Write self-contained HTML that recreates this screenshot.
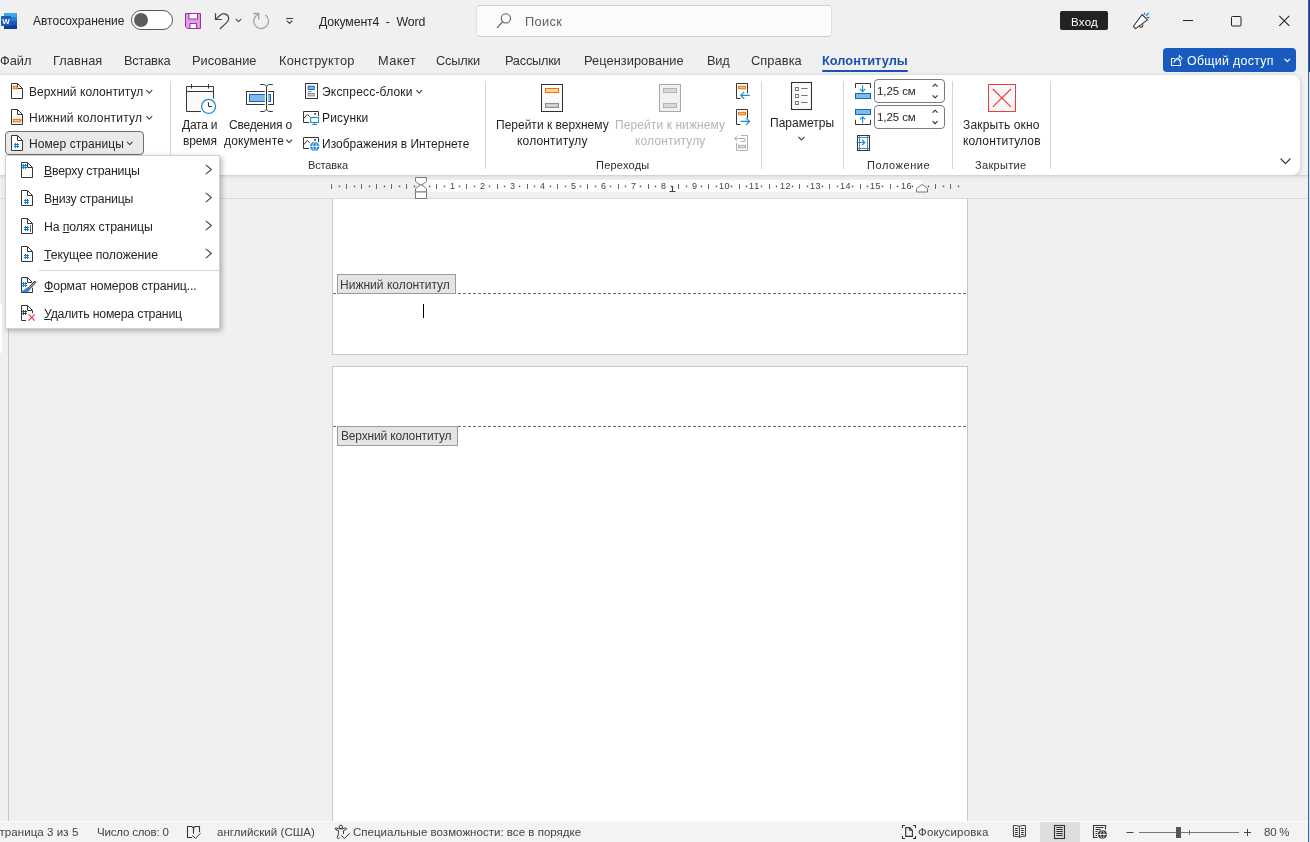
<!DOCTYPE html>
<html lang="ru"><head><meta charset="utf-8"><title>Документ4 - Word</title>
<style>
*{box-sizing:border-box;margin:0;padding:0}
html,body{width:1310px;height:842px;overflow:hidden}
body{position:relative;background:#f0f0f0;font-family:"Liberation Sans","DejaVu Sans",sans-serif;font-size:12px;color:#262626}
.a{position:absolute}
.t{will-change:transform;position:absolute;white-space:nowrap;line-height:20px;height:20px}
.t.z{z-index:30}
.t u{text-decoration:underline;text-underline-offset:0.5px;text-decoration-thickness:1px}
svg{position:absolute;overflow:visible}
#top{left:0;top:0;width:1310px;height:77px;background:#f0f0f0}
#ribbon{left:-10px;top:75px;width:1310px;height:100px;background:#fff;border-radius:8px;box-shadow:0 1px 4px rgba(0,0,0,.22)}
.sep{position:absolute;width:1px;top:81px;height:88px;background:#d6d6d6}
#search{left:476px;top:5px;width:356px;height:32px;background:#fbfbfb;border:1px solid #e0e0e0;border-top-color:#d2d2d2;border-bottom-color:#d0d0d0;border-radius:4px}
#login{left:1060px;top:11px;width:48px;height:19px;background:#222;border-radius:2px}
#share{left:1163px;top:48px;width:133px;height:24px;background:#185abd;border-radius:4px}
#tabul{left:822px;top:69.7px;width:86px;height:2.4px;background:#1a52b3;border-radius:1.2px}
#toggle{left:131px;top:10px;width:42px;height:20px;border:1px solid #555;border-radius:10px;background:#fff}
#toggle i{position:absolute;left:2px;top:2px;width:14px;height:14px;border-radius:50%;background:#5c5c5c}
#pnbtn{left:5px;top:131px;width:139px;height:24px;background:#e9e9e9;border:1px solid #6e6e6e;border-radius:4px}
.spin{position:absolute;left:874px;width:71px;height:24px;background:#fff;border:1px solid #7a7a7a;border-radius:4px}
#menu{left:5px;top:155px;width:215px;height:174px;background:#fff;border:1px solid #d2d2d2;box-shadow:2px 2px 5px rgba(0,0,0,.28);z-index:20}
#menusep{left:39px;top:270px;width:180px;height:1px;background:#d4d4d4;z-index:21}
.page{position:absolute;left:332px;width:636px;background:#fff;border:1px solid #c8c8c8}
.dash{position:absolute;left:333px;width:634px;height:1px;background:repeating-linear-gradient(90deg,#6a6a6a 0 3px,transparent 3px 5px)}
.tag{position:absolute;background:#e4e4e4;border:1px solid #9a9a9a}
#status{left:0;top:821px;width:1310px;height:21px;background:#f3f3f3;border-top:1px solid #fcfcfc}
#rulerw{left:421px;top:179.6px;width:501px;height:12px;background:#fdfdfd}
#vr{left:0;top:198px;width:9px;height:623px;border-right:1px solid #c6c6c6;background:#f0f0f0}
#vrw{left:0;top:304px;width:2px;height:49px;background:#fff}
#redge{left:1308px;top:0;width:2px;height:842px;background:linear-gradient(90deg,#2f66bd 0 1px,transparent 1px),linear-gradient(180deg,#1d3f86 0 72px,#dfe4ec 72px)}
#selview{left:1040px;top:822px;width:40px;height:20px;background:#dedede}
.z{z-index:30}

</style></head><body>
<div class="a" id="top"></div>
<div class="a" id="ribbon"></div>
<div class="a" id="search"></div>
<div class="a" id="login"></div>
<div class="a" id="share"></div>
<div class="a" id="tabul"></div>
<div class="a" id="toggle"><i></i></div>
<div class="a" id="pnbtn"></div>
<div class="sep" style="left:170px"></div>
<div class="sep" style="left:485px"></div>
<div class="sep" style="left:761px"></div>
<div class="sep" style="left:843px"></div>
<div class="sep" style="left:952px"></div>
<div class="sep" style="left:1050px"></div>
<div class="spin" style="top:79px"></div>
<div class="spin" style="top:105px"></div>
<div class="page" style="top:185px;height:170px"></div>
<div class="page" style="top:366px;height:470px"></div>
<div class="dash" style="top:293px"></div>
<div class="dash" style="top:426px"></div>
<div class="tag" style="left:337px;top:274px;width:119px;height:20px"></div>
<div class="tag" style="left:337px;top:426px;width:121px;height:20px"></div>
<div class="a" style="left:423px;top:304px;width:1px;height:14px;background:#000"></div>
<div class="a" id="vr"></div>
<div class="a" id="vrw"></div>
<div class="a" id="rulercover" style="left:0;top:175px;width:1310px;height:24px;background:linear-gradient(180deg,#cdcdcd 0,#dedede 1px,#e9e9e9 2.5px,#f0f0f0 5px);border-bottom:1px solid #dadada"></div>
<div class="a" id="rulerw"></div>
<div class="a" id="status"></div>
<div class="a" id="selview"></div>
<div class="a" id="menu"></div>
<div class="a" id="menusep"></div>
<div class="a" id="redge"></div>
<svg style="left:0;top:0;z-index:10" width="1310" height="842" viewBox="0 0 1310 842"><rect x="4" y="13" width="13" height="4" fill="#41a5ee"/><rect x="4" y="17" width="13" height="4" fill="#2b7cd3"/><rect x="4" y="21" width="13" height="4" fill="#185abd"/><rect x="4" y="25" width="13" height="4" fill="#103f91"/><rect x="4" y="13" width="13" height="16" rx="1" fill="none"/><rect x="1" y="16" width="10.2" height="10" rx="0.8" fill="#1b5cbe"/><text x="6.1" y="23.8" text-anchor="middle" font-family="Liberation Sans, sans-serif" font-weight="700" font-size="8px" fill="#fff">W</text>
<path d="M185.5 13.5H200.5V28.5H187.5L185.5 26.5Z" fill="#dc9fe2" stroke="#a02fa8" stroke-width="1"/><rect x="189" y="13.5" width="8.5" height="5.5" fill="#fff" stroke="#a02fa8" stroke-width="1"/><rect x="190" y="23.5" width="6.5" height="5" fill="#fff" stroke="#a02fa8" stroke-width="1"/>
<path d="M215.5 13.5V19.5H221.5" fill="none" stroke="#444" stroke-width="1.2" stroke-linecap="round" stroke-linejoin="round"/><path d="M215.7 19.3L220.2 15.2C223.5 12.3 228.7 14 228.7 18.6C228.7 20.8 227.5 21.8 225.8 23.4L220.3 28.5" fill="none" stroke="#444" stroke-width="1.2" stroke-linecap="round" stroke-linejoin="round"/>
<path d="M236.1 19.35L238.5 21.65L240.9 19.35" fill="none" stroke="#444" stroke-width="1.1" stroke-linecap="round" stroke-linejoin="round"/>
<path d="M253.6 13.5H258.8V19" fill="none" stroke="#a2a2a2" stroke-width="1.3" stroke-linecap="round" stroke-linejoin="round"/><path d="M258.6 14.2A7.4 7.4 0 1 0 265.6 15.2" fill="none" stroke="#a2a2a2" stroke-width="1.3" stroke-linecap="round"/>
<path d="M286.2 18.5H293" stroke="#444" stroke-width="1.1" fill="none"/><path d="M287.20000000000005 21.0L289.6 23.4L292.0 21.0" fill="none" stroke="#444" stroke-width="1.1" stroke-linecap="round" stroke-linejoin="round"/>
<circle cx="505.9" cy="18.4" r="4.6" fill="none" stroke="#5a5a5a" stroke-width="1.1"/><path d="M502.6 21.8L497.3 27.6" stroke="#5a5a5a" stroke-width="1.2" stroke-linecap="round"/>
<path d="M1142.1 14.5L1147.5 19.9L1135.6 28.6L1133.5 26.3Z" fill="#fff" stroke="#333" stroke-width="1.1" stroke-linejoin="round"/><path d="M1139.4 26.3A1.7 1.7 0 0 0 1142.6 24.6" fill="none" stroke="#333" stroke-width="1.1"/><path d="M1144.3 13L1144.7 14.3M1146.4 15.4L1148.4 13.2M1147.2 17.4L1149 17.6" stroke="#0078d4" stroke-width="1.1" stroke-linecap="round"/>
<path d="M1183 20.5H1193" stroke="#222" stroke-width="1"/><rect x="1231.5" y="16.5" width="9.5" height="9.5" rx="1" fill="none" stroke="#222" stroke-width="1"/><path d="M1279.3 15.8L1289.3 25.8M1289.3 15.8L1279.3 25.8" stroke="#222" stroke-width="1.05"/>
<path d="M1175 58.5H1171.5V65.5H1180.5V61.5" fill="none" stroke="#fff" stroke-width="1.1" stroke-linejoin="round"/><path d="M1174 62.5C1174.3 59.5 1176.5 58 1179.3 58V55.2L1182.4 58.3L1179.3 61.3V59.2C1177 59.2 1175.3 60 1174 62.5Z" fill="none" stroke="#fff" stroke-width="1" stroke-linejoin="round"/>
<path d="M1284.8999999999999 59.199999999999996L1287.3 61.6L1289.7 59.199999999999996" fill="none" stroke="#fff" stroke-width="1.2" stroke-linecap="round" stroke-linejoin="round"/>
<path d="M11.5 83.5H17.5L22.5 88.5V98.5H11.5Z" fill="#fff" stroke="#363636" stroke-width="1" stroke-linejoin="miter"/><path d="M17.5 83.5V88.5H22.5" fill="none" stroke="#363636" stroke-width="1" stroke-linejoin="miter"/>
<rect x="13.2" y="86.2" width="4" height="2.6" fill="#f8c36e" stroke="#e8730c" stroke-width="1"/>
<path d="M11.5 109.5H17.5L22.5 114.5V124.5H11.5Z" fill="#fff" stroke="#363636" stroke-width="1" stroke-linejoin="miter"/><path d="M17.5 109.5V114.5H22.5" fill="none" stroke="#363636" stroke-width="1" stroke-linejoin="miter"/>
<rect x="13.3" y="119.3" width="7.6" height="2.6" fill="#f8c36e" stroke="#e8730c" stroke-width="1"/>
<path d="M146.70000000000002 90.45L149.3 93.14999999999999L151.9 90.45" fill="none" stroke="#444" stroke-width="1.1" stroke-linecap="round" stroke-linejoin="round"/>
<path d="M146.70000000000002 116.45L149.3 119.14999999999999L151.9 116.45" fill="none" stroke="#444" stroke-width="1.1" stroke-linecap="round" stroke-linejoin="round"/>
<path d="M286.7 140.0L289.2 142.60000000000002L291.7 140.0" fill="none" stroke="#444" stroke-width="1.1" stroke-linecap="round" stroke-linejoin="round"/>
<path d="M416.59999999999997 90.45L419.2 93.14999999999999L421.8 90.45" fill="none" stroke="#444" stroke-width="1.1" stroke-linecap="round" stroke-linejoin="round"/>
<path d="M798.6 137.2L801.4 140.0L804.1999999999999 137.2" fill="none" stroke="#444" stroke-width="1.1" stroke-linecap="round" stroke-linejoin="round"/>
<path d="M213.5 98.6V86.5H186.5V111.5H200.9" fill="#fafafa" stroke="#363636" stroke-width="1"/><path d="M186.5 91.5H213.5M191.5 84V88.5M208.5 84V88.5" stroke="#363636" stroke-width="1" fill="none"/><circle cx="208.6" cy="106.4" r="7" fill="#fff" stroke="#1e8bcd" stroke-width="1.3"/><path d="M208.5 102.3V106.5H212" fill="none" stroke="#363636" stroke-width="1"/>
<rect x="246.5" y="91.5" width="27" height="13" fill="#fff" stroke="#363636" stroke-width="1"/><rect x="249.5" y="94.5" width="21" height="7" fill="#83b9ea" stroke="#1267c4" stroke-width="1"/><path d="M266.5 84.5V111.5" stroke="#fff" stroke-width="3.4"/><path d="M260.2 84.5H263C265.3 84.5 266.5 85.8 266.5 87.5V108.5C266.5 110.2 265.3 111.5 263 111.5H260.2M272.8 84.5H270C267.7 84.5 266.5 85.8 266.5 87.5M272.8 111.5H270C267.7 111.5 266.5 110.2 266.5 108.5" fill="none" stroke="#363636" stroke-width="1"/>
<rect x="305.5" y="83.5" width="12" height="15" fill="#fff" stroke="#363636" stroke-width="1"/><rect x="308.2" y="86.2" width="6" height="3.3" fill="#83b9ea" stroke="#1267c4" stroke-width="1"/><path d="M307.8 91.7H311.4" stroke="#777" stroke-width="1"/><rect x="308.2" y="93.5" width="6" height="2.4" fill="#d0d0d0" stroke="#808080" stroke-width="0.9"/>
<path d="M318.5 116.2V111.5H303.5V122.5H309" fill="none" stroke="#363636" stroke-width="1"/><path d="M303.5 118.9L307.3 114.4L309.7 116.8" fill="none" stroke="#363636" stroke-width="1"/><rect x="314.2" y="113.0" width="1.7" height="1.7" fill="#363636"/>
<rect x="310.7" y="117.5" width="7.8" height="5" fill="#fff" stroke="#1e8bcd" stroke-width="1.1"/><path d="M314.6 122.5V124.4M312.2 124.5H317" stroke="#1e8bcd" stroke-width="1.1" fill="none"/>
<path d="M318.5 142.2V137.5H303.5V148.5H309" fill="none" stroke="#363636" stroke-width="1"/><path d="M303.5 144.9L307.3 140.4L309.7 142.8" fill="none" stroke="#363636" stroke-width="1"/><rect x="314.2" y="139.0" width="1.7" height="1.7" fill="#363636"/>
<circle cx="314.7" cy="146.4" r="4.6" fill="#1e8bcd"/><path d="M310.6 146.4H318.8" stroke="#fff" stroke-width="0.9"/><ellipse cx="314.7" cy="146.4" rx="1.9" ry="4.1" fill="none" stroke="#fff" stroke-width="0.8"/>
<rect x="541.5" y="84.5" width="21" height="27" fill="#fafafa" stroke="#333" stroke-width="1"/><rect x="545.5" y="88.5" width="13" height="4" fill="#f9d890" stroke="#e8730c" stroke-width="1"/><rect x="545.5" y="103.5" width="13" height="4" fill="#d2d2d2" stroke="#8a8a8a" stroke-width="1"/>
<rect x="659.5" y="84.5" width="21" height="27" fill="#f1f1f1" stroke="#a8a8a8" stroke-width="1"/><rect x="663.5" y="88.5" width="13" height="4" fill="#d8d8d8" stroke="#b4b4b4" stroke-width="1"/><rect x="663.5" y="103.5" width="13" height="4" fill="#d8d8d8" stroke="#b4b4b4" stroke-width="1"/>
<path d="M747.5 93.3V83.5H736.5V98.5H740.5" fill="none" stroke="#363636" stroke-width="1"/><rect x="738.5" y="86.3" width="7" height="2.5" fill="#f8c36e" stroke="#e8730c" stroke-width="1"/><path d="M749.8 95.4H740.8M744.3 91.9L740.7 95.4L744.3 98.9" fill="none" stroke="#1e8bcd" stroke-width="1.2"/>
<path d="M747.5 118V109.5H736.5V124.5H740.5" fill="none" stroke="#363636" stroke-width="1"/><rect x="738.5" y="112.3" width="7" height="2.5" fill="#f8c36e" stroke="#e8730c" stroke-width="1"/><path d="M740.5 121.4H749.5M746 117.9L749.6 121.4L746 124.9" fill="none" stroke="#1e8bcd" stroke-width="1.2"/>
<path d="M741 135.5H747.5V150.5H736.5V143" fill="none" stroke="#b0b0b0" stroke-width="1"/><rect x="738.5" y="145.3" width="7" height="2.5" fill="#e0e0e0" stroke="#b0b0b0" stroke-width="1"/><path d="M734.6 138.5H745V141.5H740.5M737.5 135.8L734.6 138.5L737.5 141.2" fill="none" stroke="#b0b0b0" stroke-width="1"/>
<rect x="791.5" y="82.5" width="20" height="27" fill="#fafafa" stroke="#333" stroke-width="1.1"/><rect x="795.5" y="87.5" width="3" height="3" fill="#fff" stroke="#777" stroke-width="1"/><path d="M801.2 88.5H807.7" stroke="#777" stroke-width="1"/><rect x="795.5" y="94.5" width="3" height="3" fill="#fff" stroke="#777" stroke-width="1"/><path d="M801.2 95.5H807.7" stroke="#777" stroke-width="1"/><rect x="795.5" y="101.5" width="3" height="3" fill="#fff" stroke="#777" stroke-width="1"/><path d="M801.2 102.5H807.7" stroke="#777" stroke-width="1"/>
<path d="M855.5 88V83.5H870.5V88" fill="none" stroke="#363636" stroke-width="1"/><path d="M862.6 85.2V91.5M860 89L862.6 91.6L865.2 89" fill="none" stroke="#1e8bcd" stroke-width="1.1"/><rect x="855.5" y="93.5" width="15" height="5" fill="#83b9ea" stroke="#1267c4" stroke-width="1"/>
<rect x="855.5" y="109.5" width="15" height="5" fill="#83b9ea" stroke="#1267c4" stroke-width="1"/><path d="M862.6 123V116.8M860 119.4L862.6 116.8L865.2 119.4" fill="none" stroke="#1e8bcd" stroke-width="1.1"/><path d="M855.5 119.8V124.5H870.5V119.8" fill="none" stroke="#363636" stroke-width="1"/>
<rect x="857.5" y="135.5" width="12" height="15" fill="#fff" stroke="#363636" stroke-width="1"/><path d="M859.5 136V150M867.5 136V150M858 137.5H869M858 148.5H869" stroke="#1e8bcd" stroke-width="0.9" fill="none"/><path d="M856.5 142.5H864.6M862.2 140L864.8 142.5L862.2 145" fill="none" stroke="#1e8bcd" stroke-width="1.1"/>
<path d="M932.9 86.45L935.1 84.14999999999999L937.3000000000001 86.45" fill="none" stroke="#333" stroke-width="1.1" stroke-linecap="round" stroke-linejoin="round"/>
<path d="M932.9 95.55L935.1 97.85000000000001L937.3000000000001 95.55" fill="none" stroke="#333" stroke-width="1.1" stroke-linecap="round" stroke-linejoin="round"/>
<path d="M932.9 112.35000000000001L935.1 110.05L937.3000000000001 112.35000000000001" fill="none" stroke="#333" stroke-width="1.1" stroke-linecap="round" stroke-linejoin="round"/>
<path d="M932.9 121.44999999999999L935.1 123.75L937.3000000000001 121.44999999999999" fill="none" stroke="#333" stroke-width="1.1" stroke-linecap="round" stroke-linejoin="round"/>
<rect x="988.5" y="84.5" width="27" height="27" fill="#f8f8f8" stroke="#f03a38" stroke-width="1"/><path d="M992.8 89L1011 106.8M1011 89L992.8 106.8" stroke="#f03a38" stroke-width="1.1"/>
<path d="M1281.0 159.0L1285.5 163.60000000000002L1290.0 159.0" fill="none" stroke="#333" stroke-width="1.2" stroke-linecap="round" stroke-linejoin="round"/>
<path d="M406.5 184V189M391.5 184V189M376.5 184V189M361.5 184V189M346.5 184V189M331.5 184V189M436.5 184V189M466.5 184V189M497.5 184V189M527.5 184V189M557.5 184V189M587.5 184V189M618.5 184V189M648.5 184V189M678.5 184V189M708.5 184V189M739.5 184V189M769.5 184V189M799.5 184V189M829.5 184V189M860.5 184V189M890.5 184V189M935.5 184V189M950.5 184V189" stroke="#666" stroke-width="1"/>
<rect x="413.8" y="185.6" width="1.4" height="1.6" fill="#555"/><rect x="398.8" y="185.6" width="1.4" height="1.6" fill="#555"/><rect x="383.8" y="185.6" width="1.4" height="1.6" fill="#555"/><rect x="368.8" y="185.6" width="1.4" height="1.6" fill="#555"/><rect x="353.8" y="185.6" width="1.4" height="1.6" fill="#555"/><rect x="338.8" y="185.6" width="1.4" height="1.6" fill="#555"/><rect x="428.8" y="185.6" width="1.4" height="1.6" fill="#555"/><rect x="443.8" y="185.6" width="1.4" height="1.6" fill="#555"/><rect x="458.8" y="185.6" width="1.4" height="1.6" fill="#555"/><rect x="473.8" y="185.6" width="1.4" height="1.6" fill="#555"/><rect x="488.8" y="185.6" width="1.4" height="1.6" fill="#555"/><rect x="503.8" y="185.6" width="1.4" height="1.6" fill="#555"/><rect x="518.8" y="185.6" width="1.4" height="1.6" fill="#555"/><rect x="533.8" y="185.6" width="1.4" height="1.6" fill="#555"/><rect x="549.8" y="185.6" width="1.4" height="1.6" fill="#555"/><rect x="564.8" y="185.6" width="1.4" height="1.6" fill="#555"/><rect x="579.8" y="185.6" width="1.4" height="1.6" fill="#555"/><rect x="594.8" y="185.6" width="1.4" height="1.6" fill="#555"/><rect x="609.8" y="185.6" width="1.4" height="1.6" fill="#555"/><rect x="624.8" y="185.6" width="1.4" height="1.6" fill="#555"/><rect x="639.8" y="185.6" width="1.4" height="1.6" fill="#555"/><rect x="654.8" y="185.6" width="1.4" height="1.6" fill="#555"/><rect x="670.8" y="185.6" width="1.4" height="1.6" fill="#555"/><rect x="685.8" y="185.6" width="1.4" height="1.6" fill="#555"/><rect x="700.8" y="185.6" width="1.4" height="1.6" fill="#555"/><rect x="715.8" y="185.6" width="1.4" height="1.6" fill="#555"/><rect x="730.8" y="185.6" width="1.4" height="1.6" fill="#555"/><rect x="745.8" y="185.6" width="1.4" height="1.6" fill="#555"/><rect x="760.8" y="185.6" width="1.4" height="1.6" fill="#555"/><rect x="775.8" y="185.6" width="1.4" height="1.6" fill="#555"/><rect x="791.8" y="185.6" width="1.4" height="1.6" fill="#555"/><rect x="806.8" y="185.6" width="1.4" height="1.6" fill="#555"/><rect x="821.8" y="185.6" width="1.4" height="1.6" fill="#555"/><rect x="836.8" y="185.6" width="1.4" height="1.6" fill="#555"/><rect x="851.8" y="185.6" width="1.4" height="1.6" fill="#555"/><rect x="866.8" y="185.6" width="1.4" height="1.6" fill="#555"/><rect x="881.8" y="185.6" width="1.4" height="1.6" fill="#555"/><rect x="896.8" y="185.6" width="1.4" height="1.6" fill="#555"/><rect x="911.8" y="185.6" width="1.4" height="1.6" fill="#555"/><rect x="927.8" y="185.6" width="1.4" height="1.6" fill="#555"/><rect x="942.8" y="185.6" width="1.4" height="1.6" fill="#555"/><rect x="957.8" y="185.6" width="1.4" height="1.6" fill="#555"/>
<path d="M415.5 177.5H426.5V181.5L421 185.5L415.5 181.5Z" fill="#fff" stroke="#7a7a7a" stroke-width="1" stroke-linejoin="round"/><path d="M421 184.5L426.5 188.5V192H415.5V188.5Z" fill="#fff" stroke="#7a7a7a" stroke-width="1" stroke-linejoin="round"/><rect x="415.5" y="192" width="11" height="6.5" fill="#fff" stroke="#7a7a7a" stroke-width="1"/>
<path d="M916.5 192V188.5L922 184.5L927.5 188.5V192Z" fill="#fff" stroke="#777" stroke-width="1" stroke-linejoin="round"/>
<path d="M672.5 186V191M669.5 191.5H675.5" stroke="#444" stroke-width="1.2" fill="none"/>
<path d="M191.8 837.5H187.5V826.5H191C192.5 826.5 193.5 827.3 193.5 828.8V833.3M193.5 828.8C193.5 827.3 194.5 826.5 196 826.5H199.5V831.8" fill="none" stroke="#333" stroke-width="1.1" stroke-linejoin="round" stroke-linecap="round"/><path d="M192.3 835.4L195.4 838.4L200.6 833.3" fill="none" stroke="#333" stroke-width="1"/>
<circle cx="340.8" cy="826.9" r="1.7" fill="none" stroke="#333" stroke-width="1"/><path d="M336.2 829.8C334.4 829.4 334.8 827.6 336.4 828C339.5 829.2 342.2 829.2 345.3 828C346.9 827.6 347.3 829.4 345.5 829.8L343.5 830.6V833.6M336.2 829.8L338.6 830.6C338.6 833.5 338.2 835.5 337.3 837.3C336.9 838.6 339 839.2 339.6 838" fill="none" stroke="#333" stroke-width="1" stroke-linecap="round" stroke-linejoin="round"/><path d="M341.3 835.4L344.5 838.6L349.7 833.1" fill="none" stroke="#333" stroke-width="1"/>
<path d="M902.5 828V825.5H905M913 825.5H915.5V828M915.5 836V838.5H913M905 838.5H902.5V836" fill="none" stroke="#333" stroke-width="1.1"/><path d="M905.7 827.6H909.7L912.4 830.3V836.4H905.7Z M909.7 827.6V830.3H912.4" fill="none" stroke="#333" stroke-width="1.1" stroke-linejoin="round"/>
<path d="M1019.4 826.3C1017.5 825.5 1015 825.5 1013.4 825.5V836.3C1015 836.3 1017.5 836.3 1019.4 837.2C1021.3 836.3 1023.8 836.3 1025.4 836.3V825.5C1023.8 825.5 1021.3 825.5 1019.4 826.3ZM1019.4 826.3V837.2" fill="none" stroke="#333" stroke-width="1"/><path d="M1015 828.5H1017.8M1021 828.5H1023.8" stroke="#333" stroke-width="1"/><path d="M1015 830.5H1017.8M1021 830.5H1023.8" stroke="#333" stroke-width="1"/><path d="M1015 832.5H1017.8M1021 832.5H1023.8" stroke="#333" stroke-width="1"/><path d="M1015 834.5H1017.8M1021 834.5H1023.8" stroke="#333" stroke-width="1"/>
<rect x="1054.5" y="825.5" width="10" height="13" fill="none" stroke="#333" stroke-width="1.1"/><path d="M1056.3 827.5H1062.8" stroke="#333" stroke-width="1"/><path d="M1056.3 829.5H1062.8" stroke="#333" stroke-width="1"/><path d="M1056.3 831.5H1062.8" stroke="#333" stroke-width="1"/><path d="M1056.3 833.5H1062.8" stroke="#333" stroke-width="1"/><path d="M1056.3 835.5H1062.8" stroke="#333" stroke-width="1"/>
<path d="M1105.5 829.5V825.5H1093.5V837.5H1097.5" fill="none" stroke="#333" stroke-width="1.1"/><path d="M1095.5 827.5H1103.5M1095.5 829.5H1100.5M1095.5 831.5H1097.5M1095.5 833.5H1097.5M1095.5 835.5H1097" stroke="#333" stroke-width="1"/><circle cx="1102.4" cy="834.4" r="4.5" fill="#333"/><path d="M1098.2 834.4H1106.6" stroke="#fff" stroke-width="0.9"/><ellipse cx="1102.4" cy="834.4" rx="1.8" ry="4" fill="none" stroke="#fff" stroke-width="0.8"/>
<path d="M1126.5 832.5H1133.5M1244 832.5H1251M1247.5 829V836" stroke="#444" stroke-width="1"/><path d="M1139 832.5H1239" stroke="#777" stroke-width="1"/><path d="M1189.5 830V835" stroke="#777" stroke-width="1"/><rect x="1176" y="827" width="5" height="11" fill="#555"/>
<path d="M11.5 135.5H17.5L22.5 140.5V150.5H11.5Z" fill="#fff" stroke="#363636" stroke-width="1" stroke-linejoin="miter"/><path d="M17.5 135.5V140.5H22.5" fill="none" stroke="#363636" stroke-width="1" stroke-linejoin="miter"/>
<path d="M15.5 143V148M17.5 143V148M14 144.5H19M14 146.5H19" stroke="#1580d0" stroke-width="1" fill="none"/>
<path d="M127.30000000000001 142.1L129.8 144.70000000000002L132.3 142.1" fill="none" stroke="#444" stroke-width="1.1" stroke-linecap="round" stroke-linejoin="round"/></svg>
<svg style="left:0;top:0;z-index:30" width="1310" height="842" viewBox="0 0 1310 842"><path d="M21.5 162.5H27.5L32.5 167.5V177.5H21.5Z" fill="#fff" stroke="#363636" stroke-width="1" stroke-linejoin="miter"/><path d="M27.5 162.5V167.5H32.5" fill="none" stroke="#363636" stroke-width="1" stroke-linejoin="miter"/>
<path d="M23.5 164V169M25.5 164V169M22 165.5H27M22 167.5H27" stroke="#1580d0" stroke-width="1" fill="none"/>
<path d="M21.5 190.5H27.5L32.5 195.5V205.5H21.5Z" fill="#fff" stroke="#363636" stroke-width="1" stroke-linejoin="miter"/><path d="M27.5 190.5V195.5H32.5" fill="none" stroke="#363636" stroke-width="1" stroke-linejoin="miter"/>
<path d="M25.5 199V204M27.5 199V204M24 200.5H29M24 202.5H29" stroke="#1580d0" stroke-width="1" fill="none"/>
<path d="M21.5 218.5H27.5L32.5 223.5V233.5H21.5Z" fill="#fff" stroke="#363636" stroke-width="1" stroke-linejoin="miter"/><path d="M27.5 218.5V223.5H32.5" fill="none" stroke="#363636" stroke-width="1" stroke-linejoin="miter"/>
<path d="M25.5 226V231M27.5 226V231M24 227.5H29M24 229.5H29" stroke="#1580d0" stroke-width="1" fill="none"/>
<path d="M30.5 225V232" stroke="#666" stroke-width="1"/>
<path d="M21.5 246.5H27.5L32.5 251.5V261.5H21.5Z" fill="#fff" stroke="#363636" stroke-width="1" stroke-linejoin="miter"/><path d="M27.5 246.5V251.5H32.5" fill="none" stroke="#363636" stroke-width="1" stroke-linejoin="miter"/>
<path d="M25.5 254V259M27.5 254V259M24 255.5H29M24 257.5H29" stroke="#1580d0" stroke-width="1" fill="none"/>
<path d="M21.5 277.5H27.5L32.5 282.5V292.5H21.5Z" fill="#fff" stroke="#363636" stroke-width="1" stroke-linejoin="miter"/><path d="M27.5 277.5V282.5H32.5" fill="none" stroke="#363636" stroke-width="1" stroke-linejoin="miter"/>
<path d="M23.5 282V287M25.5 282V287M22 283.5H27M22 285.5H27" stroke="#1580d0" stroke-width="1" fill="none"/>
<path d="M35 282L28.8 288.8" stroke="#fff" stroke-width="4"/><path d="M34.9 282.2L28.6 288.9" stroke="#444" stroke-width="2.6" stroke-linecap="round"/><path d="M34.7 282.5L28.8 288.7" stroke="#c8c8c8" stroke-width="1" stroke-linecap="round"/><path d="M29.6 289.6L27.6 287.7C25.8 287.9 25.5 290.2 22 291.3C25.5 292.6 29 292 29.6 289.6Z" fill="#2b88d8" stroke="#1267c4" stroke-width="0.6"/>
<path d="M32.5 313.3V310.5L27.5 305.5H21.5V320.5H26M27.5 305.5V310.5H32.5" fill="none" stroke="#363636" stroke-width="1" stroke-linejoin="round"/>
<path d="M23.5 310V315M25.5 310V315M22 311.5H27M22 313.5H27" stroke="#444" stroke-width="1" fill="none"/>
<path d="M28.6 314.4L34.7 320.6M34.7 314.4L28.6 320.6" stroke="#e8373d" stroke-width="1.2"/>
<path d="M206.1 165.2L211.29999999999998 169.5L206.1 173.8" fill="none" stroke="#444" stroke-width="1.1" stroke-linecap="round" stroke-linejoin="round"/>
<path d="M206.1 193.2L211.29999999999998 197.5L206.1 201.8" fill="none" stroke="#444" stroke-width="1.1" stroke-linecap="round" stroke-linejoin="round"/>
<path d="M206.1 221.2L211.29999999999998 225.5L206.1 229.8" fill="none" stroke="#444" stroke-width="1.1" stroke-linecap="round" stroke-linejoin="round"/>
<path d="M206.1 249.2L211.29999999999998 253.5L206.1 257.8" fill="none" stroke="#444" stroke-width="1.1" stroke-linecap="round" stroke-linejoin="round"/></svg>

<span id="t0" class="t " style="left:33.1px;top:11.00px;font-size:12px;color:#262626;font-weight:400;letter-spacing:0.001px">Автосохранение</span>
<span id="t1" class="t " style="left:319.4px;top:12.00px;font-size:12.3px;color:#262626;font-weight:400;letter-spacing:-0.123px">Документ4&nbsp; -&nbsp; Word</span>
<span id="t2" class="t " style="left:524.7px;top:12.00px;font-size:12.8px;color:#616161;font-weight:400;letter-spacing:0.366px">Поиск</span>
<span id="t3" class="t " style="left:1070.5px;top:12.00px;font-size:11.5px;color:#ffffff;font-weight:400;letter-spacing:0.271px">Вход</span>
<span id="t4" class="t " style="left:0.2px;top:51.00px;font-size:12.8px;color:#333333;font-weight:400;letter-spacing:-0.017px">Файл</span>
<span id="t5" class="t " style="left:53.2px;top:51.00px;font-size:12.8px;color:#333333;font-weight:400;letter-spacing:0.097px">Главная</span>
<span id="t6" class="t " style="left:124.2px;top:51.00px;font-size:12.8px;color:#333333;font-weight:400;letter-spacing:-0.168px">Вставка</span>
<span id="t7" class="t " style="left:192.2px;top:51.00px;font-size:12.8px;color:#333333;font-weight:400;letter-spacing:-0.006px">Рисование</span>
<span id="t8" class="t " style="left:279.4px;top:51.00px;font-size:12.8px;color:#333333;font-weight:400;letter-spacing:0.248px">Конструктор</span>
<span id="t9" class="t " style="left:377.6px;top:51.00px;font-size:12.8px;color:#333333;font-weight:400;letter-spacing:0.356px">Макет</span>
<span id="t10" class="t " style="left:436.2px;top:51.00px;font-size:12.8px;color:#333333;font-weight:400;letter-spacing:-0.177px">Ссылки</span>
<span id="t11" class="t " style="left:504.8px;top:51.00px;font-size:12.8px;color:#333333;font-weight:400;letter-spacing:-0.242px">Рассылки</span>
<span id="t12" class="t " style="left:584.2px;top:51.00px;font-size:12.8px;color:#333333;font-weight:400;letter-spacing:0.062px">Рецензирование</span>
<span id="t13" class="t " style="left:707.2px;top:51.00px;font-size:12.8px;color:#333333;font-weight:400;letter-spacing:-0.252px">Вид</span>
<span id="t14" class="t " style="left:750.5px;top:51.00px;font-size:12.8px;color:#333333;font-weight:400;letter-spacing:0.085px">Справка</span>
<span id="t15" class="t " style="left:821.5px;top:51.00px;font-size:12.8px;color:#1a52b3;font-weight:700;letter-spacing:0.023px">Колонтитулы</span>
<span id="t16" class="t " style="left:1186.8px;top:51.00px;font-size:12.4px;color:#ffffff;font-weight:400;letter-spacing:0.296px">Общий доступ</span>
<span id="t17" class="t " style="left:29.0px;top:82.00px;font-size:12px;color:#262626;font-weight:400;letter-spacing:0.051px">Верхний колонтитул</span>
<span id="t18" class="t " style="left:29.0px;top:108.00px;font-size:12px;color:#262626;font-weight:400;letter-spacing:0.213px">Нижний колонтитул</span>
<span id="t19" class="t " style="left:29.0px;top:134.00px;font-size:12px;color:#262626;font-weight:400;letter-spacing:0.068px">Номер страницы</span>
<span id="t20" class="t " style="left:181.5px;top:115.00px;font-size:12px;color:#1f1f1f;font-weight:400;letter-spacing:-0.218px">Дата и</span>
<span id="t21" class="t " style="left:183.0px;top:131.00px;font-size:12px;color:#1f1f1f;font-weight:400;letter-spacing:-0.137px">время</span>
<span id="t22" class="t " style="left:228.6px;top:115.00px;font-size:12px;color:#1f1f1f;font-weight:400;letter-spacing:-0.193px">Сведения о</span>
<span id="t23" class="t " style="left:224.2px;top:131.00px;font-size:12px;color:#1f1f1f;font-weight:400;letter-spacing:0.165px">документе</span>
<span id="t24" class="t " style="left:322.4px;top:82.00px;font-size:12px;color:#1f1f1f;font-weight:400;letter-spacing:0.196px">Экспресс-блоки</span>
<span id="t25" class="t " style="left:322.4px;top:108.00px;font-size:12px;color:#1f1f1f;font-weight:400;letter-spacing:0.172px">Рисунки</span>
<span id="t26" class="t " style="left:322.4px;top:134.00px;font-size:12px;color:#1f1f1f;font-weight:400;letter-spacing:0.002px">Изображения в Интернете</span>
<span id="t27" class="t " style="left:307.7px;top:155.00px;font-size:11px;color:#2e2e2e;font-weight:400;letter-spacing:-0.127px">Вставка</span>
<span id="t28" class="t " style="left:495.6px;top:115.00px;font-size:12px;color:#1f1f1f;font-weight:400;letter-spacing:0.005px">Перейти к верхнему</span>
<span id="t29" class="t " style="left:516.6px;top:131.00px;font-size:12px;color:#1f1f1f;font-weight:400;letter-spacing:0.172px">колонтитулу</span>
<span id="t30" class="t " style="left:614.8px;top:115.00px;font-size:12px;color:#b4b4b4;font-weight:400;letter-spacing:0.093px">Перейти к нижнему</span>
<span id="t31" class="t " style="left:634.8px;top:131.00px;font-size:12px;color:#b4b4b4;font-weight:400;letter-spacing:0.153px">колонтитулу</span>
<span id="t32" class="t " style="left:596.4px;top:155.00px;font-size:11px;color:#2e2e2e;font-weight:400;letter-spacing:0.236px">Переходы</span>
<span id="t33" class="t " style="left:770.0px;top:113.00px;font-size:12px;color:#1f1f1f;font-weight:400;letter-spacing:0.015px">Параметры</span>
<span id="t34" class="t " style="left:877.4px;top:81.00px;font-size:11.5px;color:#1f1f1f;font-weight:400;letter-spacing:-0.076px">1,25 см</span>
<span id="t35" class="t " style="left:877.4px;top:107.00px;font-size:11.5px;color:#1f1f1f;font-weight:400;letter-spacing:-0.076px">1,25 см</span>
<span id="t36" class="t " style="left:866.9px;top:155.00px;font-size:11px;color:#2e2e2e;font-weight:400;letter-spacing:0.562px">Положение</span>
<span id="t37" class="t " style="left:963.4px;top:115.00px;font-size:12px;color:#1f1f1f;font-weight:400;letter-spacing:0.152px">Закрыть окно</span>
<span id="t38" class="t " style="left:962.9px;top:131.00px;font-size:12px;color:#1f1f1f;font-weight:400;letter-spacing:0.143px">колонтитулов</span>
<span id="t39" class="t " style="left:975.2px;top:155.00px;font-size:11px;color:#2e2e2e;font-weight:400;letter-spacing:0.312px">Закрытие</span>
<span id="t40" class="t z" style="left:43.7px;top:161.00px;font-size:12.3px;color:#262626;font-weight:400;letter-spacing:-0.217px"><u>В</u>верху страницы</span>
<span id="t41" class="t z" style="left:43.7px;top:189.00px;font-size:12.3px;color:#262626;font-weight:400;letter-spacing:-0.196px">В<u>н</u>изу страницы</span>
<span id="t42" class="t z" style="left:43.7px;top:217.00px;font-size:12.3px;color:#262626;font-weight:400;letter-spacing:-0.128px">На <u>п</u>олях страницы</span>
<span id="t43" class="t z" style="left:43.7px;top:245.00px;font-size:12.3px;color:#262626;font-weight:400;letter-spacing:-0.078px"><u>Т</u>екущее положение</span>
<span id="t44" class="t z" style="left:43.7px;top:276.00px;font-size:12.3px;color:#262626;font-weight:400;letter-spacing:-0.139px"><u>Ф</u>ормат номеров страниц...</span>
<span id="t45" class="t z" style="left:43.7px;top:304.00px;font-size:12.3px;color:#262626;font-weight:400;letter-spacing:-0.212px"><u>У</u>далить номера страниц</span>
<span id="t46" class="t " style="left:340.4px;top:275.00px;font-size:12px;color:#3a3a3a;font-weight:400;letter-spacing:0.019px">Нижний колонтитул</span>
<span id="t47" class="t " style="left:341.3px;top:426.00px;font-size:12px;color:#3a3a3a;font-weight:400;letter-spacing:-0.172px">Верхний колонтитул</span>
<span id="t48" class="t " style="left:-9.3px;top:822.00px;font-size:11.5px;color:#444444;font-weight:400;letter-spacing:0.086px">Страница 3 из 5</span>
<span id="t49" class="t " style="left:96.9px;top:822.00px;font-size:11.5px;color:#444444;font-weight:400;letter-spacing:-0.189px">Число слов: 0</span>
<span id="t50" class="t " style="left:217.1px;top:822.00px;font-size:11.5px;color:#444444;font-weight:400;letter-spacing:0.041px">английский (США)</span>
<span id="t51" class="t " style="left:352.8px;top:822.00px;font-size:11.5px;color:#444444;font-weight:400;letter-spacing:0.026px">Специальные возможности: все в порядке</span>
<span id="t52" class="t " style="left:917.7px;top:822.00px;font-size:11.5px;color:#444444;font-weight:400;letter-spacing:0.165px">Фокусировка</span>
<span id="t53" class="t " style="left:1264.2px;top:822.00px;font-size:11.5px;color:#444444;font-weight:400;letter-spacing:-0.205px">80 %</span>
<span id="t54" class="t r" style="left:449.5px;top:176.00px;font-size:9px;color:#444444;font-weight:400;letter-spacing:1.184px">1</span>
<span id="t55" class="t r" style="left:479.8px;top:176.00px;font-size:9px;color:#444444;font-weight:400;letter-spacing:1.184px">2</span>
<span id="t56" class="t r" style="left:510.0px;top:176.00px;font-size:9px;color:#444444;font-weight:400;letter-spacing:1.184px">3</span>
<span id="t57" class="t r" style="left:540.3px;top:176.00px;font-size:9px;color:#444444;font-weight:400;letter-spacing:1.184px">4</span>
<span id="t58" class="t r" style="left:570.5px;top:176.00px;font-size:9px;color:#444444;font-weight:400;letter-spacing:1.184px">5</span>
<span id="t59" class="t r" style="left:600.7px;top:176.00px;font-size:9px;color:#444444;font-weight:400;letter-spacing:1.184px">6</span>
<span id="t60" class="t r" style="left:631.0px;top:176.00px;font-size:9px;color:#444444;font-weight:400;letter-spacing:1.184px">7</span>
<span id="t61" class="t r" style="left:661.2px;top:176.00px;font-size:9px;color:#444444;font-weight:400;letter-spacing:1.184px">8</span>
<span id="t62" class="t r" style="left:691.5px;top:176.00px;font-size:9px;color:#444444;font-weight:400;letter-spacing:1.184px">9</span>
<span id="t63" class="t r" style="left:719.2px;top:176.00px;font-size:9px;color:#444444;font-weight:400;letter-spacing:0.592px">10</span>
<span id="t64" class="t r" style="left:749.4px;top:176.00px;font-size:9px;color:#444444;font-weight:400;letter-spacing:0.928px">11</span>
<span id="t65" class="t r" style="left:779.7px;top:176.00px;font-size:9px;color:#444444;font-weight:400;letter-spacing:0.592px">12</span>
<span id="t66" class="t r" style="left:809.9px;top:176.00px;font-size:9px;color:#444444;font-weight:400;letter-spacing:0.592px">13</span>
<span id="t67" class="t r" style="left:840.2px;top:176.00px;font-size:9px;color:#444444;font-weight:400;letter-spacing:0.592px">14</span>
<span id="t68" class="t r" style="left:870.4px;top:176.00px;font-size:9px;color:#444444;font-weight:400;letter-spacing:0.592px">15</span>
<span id="t69" class="t r" style="left:900.6px;top:176.00px;font-size:9px;color:#444444;font-weight:400;letter-spacing:0.592px">16</span>
</body></html>
